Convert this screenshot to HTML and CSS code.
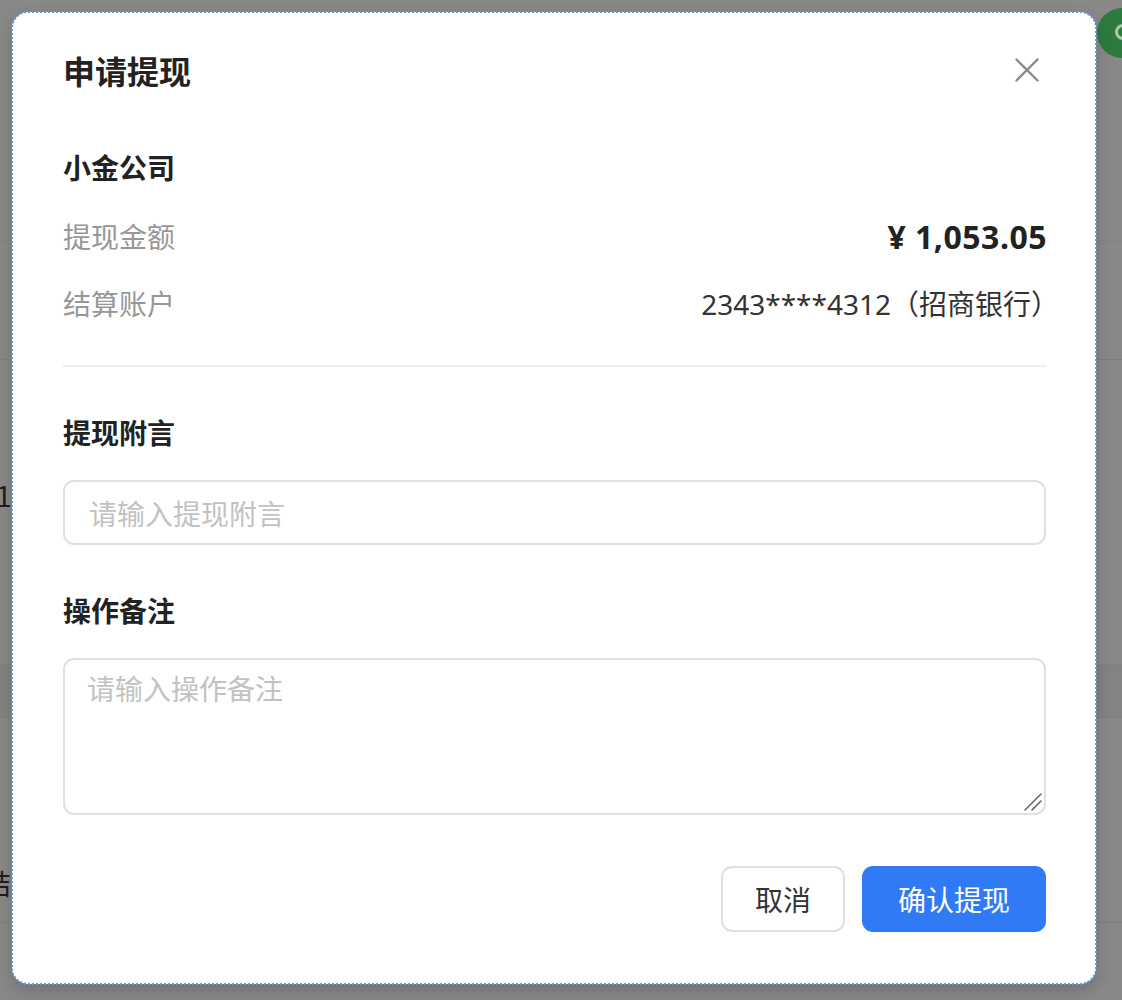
FILE: index.html
```html
<!DOCTYPE html>
<html lang="zh-CN">
<head>
<meta charset="utf-8">
<title>申请提现</title>
<link rel="stylesheet" href="styles.css">
</head>
<body>
<div class="backdrop">
  <div class="bg-row bg-row-a"></div>
  <div class="bg-row bg-row-b"></div>
  <div class="bg-row bg-row-c"><span class="bg-text bg-text-one">1</span></div>
  <div class="bg-row bg-row-d"></div>
  <div class="bg-row bg-row-e"><span class="bg-text bg-text-two">结算</span></div>
  <div class="bg-row bg-row-f"></div>
</div>
<div class="help-fab"><span class="help-dot"></span></div>

<div class="modal" tabindex="-1">
  <div class="modal-header">
    <h2 class="modal-title">申请提现</h2>
    <button class="close-btn" aria-label="关闭">
      <svg width="24" height="24" viewBox="0 0 24 24"><path d="M1.5 1.5 L22.5 22.5 M22.5 1.5 L1.5 22.5" stroke="#8a8a8a" stroke-width="2.4" stroke-linecap="round" fill="none"/></svg>
    </button>
  </div>

  <div class="company">小金公司</div>
  <div class="info-row info-row-first">
    <span class="info-label">提现金额</span>
    <span class="info-amount">¥ 1,053.05</span>
  </div>
  <div class="info-row">
    <span class="info-label">结算账户</span>
    <span class="info-value">2343****4312（招商银行）</span>
  </div>

  <div class="divider"></div>

  <div class="field-label">提现附言</div>
  <input class="text-input" type="text" placeholder="请输入提现附言">

  <div class="field-label">操作备注</div>
  <div class="area-wrap">
    <textarea class="text-area" placeholder="请输入操作备注"></textarea>
    <svg class="resize-grip" width="20" height="20" viewBox="0 0 20 20"><path d="M2 18 L18 2 M9 18 L18 9" stroke="#666666" stroke-width="1.6" stroke-linecap="round" fill="none"/></svg>
  </div>

  <div class="modal-footer">
    <button class="btn btn-default">取消</button>
    <button class="btn btn-primary">确认提现</button>
  </div>
</div>
</body>
</html>
```
FILE: styles.css
```css
* { box-sizing: border-box; }

html, body {
  margin: 0;
  padding: 0;
  width: 1122px;
  height: 1000px;
  overflow: hidden;
  background: #888888;
  font-family: "Liberation Sans", "Noto Sans CJK SC", sans-serif;
}

.backdrop {
  display: flex;
  flex-direction: column;
  width: 1122px;
  height: 1000px;
}

.bg-row { width: 100%; flex: none; }
.bg-row-a { height: 241px; border-bottom: 1px solid #838383; }
.bg-row-b { height: 119px; border-bottom: 1px solid #7f7f7f; }
.bg-row-c { height: 305px; padding-top: 118px; border-bottom: 1px solid #7f7f7f; }
.bg-row-d { height: 53px; background: #838383; border-bottom: 1px solid #7d7d7d; }
.bg-row-e { height: 205px; padding-top: 148px; border-bottom: 1px solid #7f7f7f; }
.bg-row-f { flex: 1; }

.bg-text {
  display: block;
  font-family: "Noto Sans CJK SC", sans-serif;
  font-size: 28px;
  line-height: 34px;
  color: #1e1e1e;
}
.bg-text-one { margin-left: -4px; }
.bg-text-two { margin-left: -17px; }

.help-fab {
  position: absolute;
  left: 1097px;
  top: 8px;
  width: 50px;
  height: 50px;
  border-radius: 50%;
  background: #2e7a3e;
}
.help-dot {
  position: absolute;
  left: 18px;
  top: 16px;
  width: 16px;
  height: 16px;
  border-radius: 50%;
  border: 3px solid #a9c9ae;
}

.modal {
  position: absolute;
  left: 12px;
  top: 12px;
  width: 1084px;
  height: 972px;
  background: #ffffff;
  border-radius: 16px;
  outline: 2px dotted #5a9be8;
  outline-offset: -1px;
  box-shadow: 0 6px 16px rgba(0, 0, 0, 0.18);
  padding: 36px 50px 52px 51px;
  display: flex;
  flex-direction: column;
  font-family: "Noto Sans CJK SC", sans-serif;
}

.modal-header {
  display: flex;
  align-items: center;
  justify-content: space-between;
  height: 44px;
}

.modal-title {
  margin: 0;
  font-size: 32px;
  line-height: 44px;
  font-weight: 700;
  color: #222222;
}

.close-btn {
  border: none;
  background: none;
  padding: 0;
  width: 24px;
  height: 24px;
  margin-right: 7px;
  display: flex;
}

.company {
  margin-top: 55px;
  font-size: 28px;
  line-height: 40px;
  font-weight: 700;
  color: #222222;
}

.info-row {
  display: flex;
  justify-content: space-between;
  align-items: center;
  height: 40px;
  margin-top: 27px;
}
.info-row-first { margin-top: 29px; }

.info-label {
  font-size: 28px;
  color: #979797;
}

.info-amount {
  font-family: "Noto Sans", "Noto Sans CJK SC", sans-serif;
  font-size: 32px;
  font-weight: 700;
  letter-spacing: 0.5px;
  margin-right: -1px;
  color: #222222;
}

.info-value {
  font-family: "Noto Sans", "Noto Sans CJK SC", sans-serif;
  font-size: 28px;
  color: #333333;
  margin-right: -13px;
}

.divider {
  margin-top: 42px;
  height: 2px;
  background: #efefef;
}

.field-label {
  margin-top: 45px;
  font-size: 28px;
  line-height: 40px;
  font-weight: 700;
  color: #222222;
}

.text-input,
.text-area {
  width: 100%;
  border: 2px solid #e0e0e0;
  border-radius: 11px;
  background: #ffffff;
  font-family: "Noto Sans CJK SC", sans-serif;
  font-size: 28px;
  color: #333333;
  outline: none;
}

.text-input {
  margin-top: 28px;
  height: 65px;
  padding: 0 24px;
}

.area-wrap {
  position: relative;
  margin-top: 28px;
}

.text-area {
  height: 157px;
  padding: 8px 22px;
  line-height: 40px;
  resize: none;
  display: block;
}

.resize-grip {
  position: absolute;
  right: 3px;
  bottom: 3px;
}

.text-input::placeholder,
.text-area::placeholder {
  color: #c2c2c2;
}

.modal-footer {
  margin-top: 51px;
  display: flex;
  justify-content: flex-end;
  gap: 17px;
}

.btn {
  height: 66px;
  border-radius: 11px;
  font-family: "Noto Sans CJK SC", sans-serif;
  font-size: 28px;
  padding: 0;
}

.btn-default {
  width: 124px;
  border: 2px solid #e0e0e0;
  background: #ffffff;
  color: #333333;
}

.btn-primary {
  width: 184px;
  border: none;
  background: #307af6;
  color: #ffffff;
}
```
